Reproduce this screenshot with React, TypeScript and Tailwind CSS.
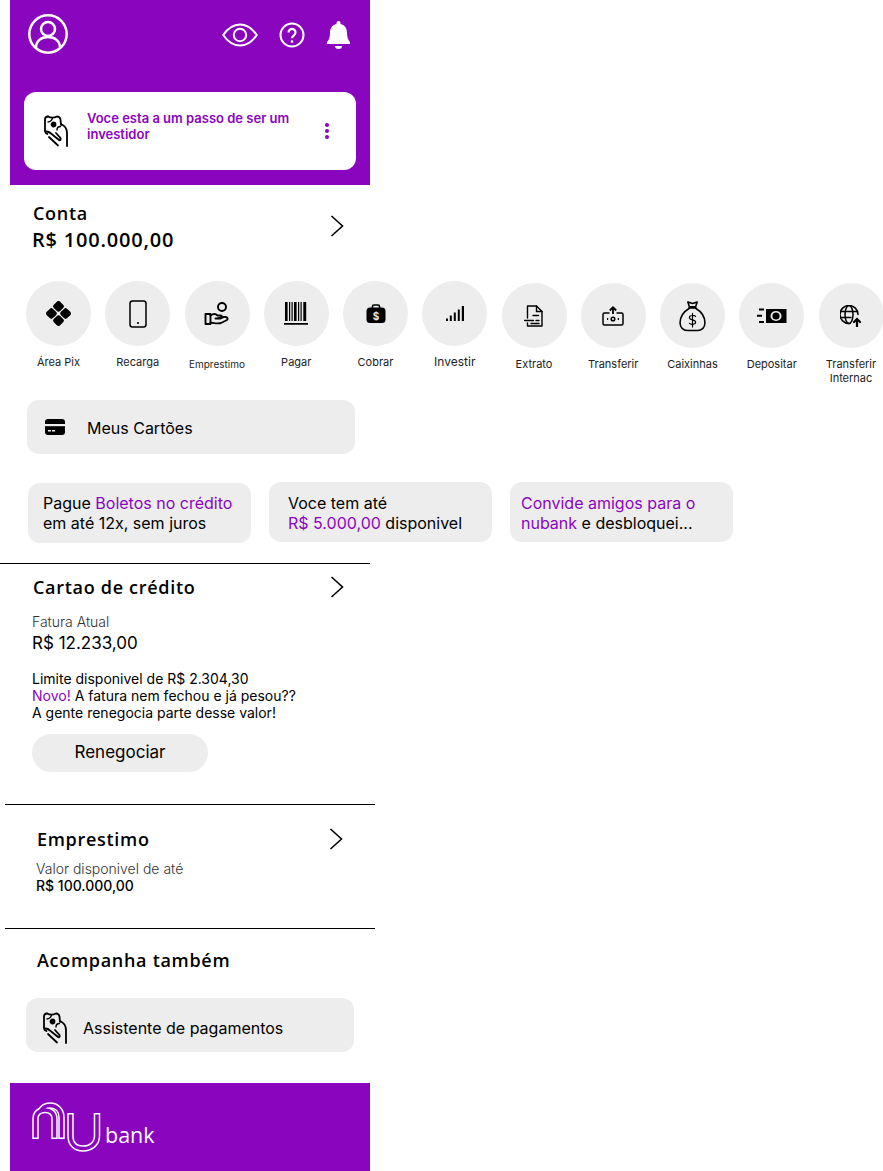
import type { ReactNode } from 'react'

const purple = '#8a05be'

function Chevron({ className }: { className?: string }) {
  return (
    <span className={`flex h-[30px] w-[30px] items-center justify-center ${className ?? ''}`}>
      <svg width="14" height="22" viewBox="0 0 14 22" fill="none" stroke="currentColor" strokeWidth={1.600}>
        <path d="M1.500 1l11 10-11 10" />
      </svg>
    </span>
  )
}

function MoneyHand({ className }: { className?: string }) {
  return (
    <svg width="24" height="32" viewBox="0 0 24 32" fill="none" stroke="currentColor" strokeWidth={1.800} strokeLinecap="round" strokeLinejoin="round" className={className}>
      <path d="M4 1.500C2 1.500 1 2.500 1 4.500v11c0 2 1 3 2.500 3.500" />
      <path d="M4 1.500c3 1.500 6 1.500 9 0 2 0 3 1 3.500 3L17 10" />
      <path d="M4 7c2 0 4-2 4.500-4M13 15c0-2 1.500-3.500 3.500-3.500" strokeWidth={1.400} />
      <circle cx="9.500" cy="9.500" r="2" fill="currentColor" />
      <path d="M17 9c3.500 1.500 6 5 6 9v13" />
      <path d="M2.500 16.500c2 0 3 .5 4.500 2l8 6.500c1.500 1 2.500-1 1-2.500l-4-4.500" />
      <path d="M5 22l9 8.500" />
    </svg>
  )
}

function Pix() {
  return (
    <svg width="25" height="25" viewBox="0 0 26 26" fill="currentColor">
      <rect x="8.400" y="1" width="9.200" height="9.200" rx="2.400" transform="rotate(45 13 5.600)" />
      <rect x="8.400" y="15.800" width="9.200" height="9.200" rx="2.400" transform="rotate(45 13 20.400)" />
      <rect x="1" y="8.400" width="9.200" height="9.200" rx="2.400" transform="rotate(45 5.600 13)" />
      <rect x="15.800" y="8.400" width="9.200" height="9.200" rx="2.400" transform="rotate(45 20.400 13)" />
    </svg>
  )
}

function Phone() {
  return (
    <svg width="18" height="28" viewBox="0 0 18 28" fill="none" stroke="currentColor" strokeWidth={1.500}>
      <rect x="1" y="1" width="16" height="26" rx="2.500" />
      <circle cx="9" cy="23" r="1.100" fill="currentColor" stroke="none" />
    </svg>
  )
}

function HandCoin() {
  return (
    <svg width="26" height="26" viewBox="0 0 26 26" fill="none" stroke="currentColor" strokeWidth={1.900} strokeLinejoin="round" strokeLinecap="round">
      <circle cx="18" cy="6" r="4" />
      <rect x="1.500" y="13" width="5" height="10" />
      <path d="M6.500 14.500c3-2 5-2 7 0h3a1.500 1.500 0 0 1 0 3h-5M13 17.500l7-1.500c3-.5 4.500 1.500 3 3l-6 3c-3 1-7 0-10.500-.5" />
    </svg>
  )
}

function Barcode() {
  return (
    <svg width="24" height="24" viewBox="0 0 24 24" fill="currentColor">
      <path d="M1 0h2.600v19H1zM5 0h1.200v19H5zM7.500 0h1.200v19H7.500zM10 0h2.600v19H10zM14 0h1.200v19H14zM16.500 0h1.200v19h-1.200zM19.300 0h2.900v19h-2.900zM0 21h24v1.800H0z" />
    </svg>
  )
}

function Briefcase() {
  return (
    <svg width="20" height="20" viewBox="0 0 20 20">
      <path d="M6.500 4V2.500A1.500 1.500 0 0 1 8 1h4a1.500 1.500 0 0 1 1.500 1.500V4" fill="none" stroke="currentColor" strokeWidth="1.600" />
      <rect x="0.500" y="3.500" width="19" height="15.500" rx="3.500" fill="currentColor" />
      <text x="10" y="15.500" textAnchor="middle" fill="#ededed" fontSize="10" fontWeight="700" fontFamily="Inter, sans-serif">$</text>
    </svg>
  )
}

function Signal() {
  return (
    <svg width="18" height="15" viewBox="0 0 18 15" fill="currentColor">
      <path d="M0 12.500h2V15H0zM3.800 9.500h2V15h-2zM7.800 6.500h2V15h-2zM11.800 3.500h2V15h-2zM15.800 0h2.200v15h-2.200z" />
    </svg>
  )
}

function Doc() {
  return (
    <svg width="20" height="22" viewBox="0 0 20 22" fill="none" stroke="currentColor" strokeWidth={1.400} strokeLinejoin="round" strokeLinecap="round">
      <path d="M3.500 13V1h9l5.500 5.500V21H3.500v-3" />
      <path d="M12.500 1v5.500H18" />
      <path d="M0.500 15.500h9M9 10.500h5.500M12 15.500h3M7 18.500h8" />
    </svg>
  )
}

function TransferBox() {
  return (
    <svg width="22" height="20" viewBox="0 0 22 20" fill="none" stroke="currentColor" strokeWidth={1.500} strokeLinejoin="round">
      <path d="M7.500 7H2.500A1.500 1.500 0 0 0 1 8.500v9A1.500 1.500 0 0 0 2.500 19h17a1.500 1.500 0 0 0 1.500-1.500v-9A1.500 1.500 0 0 0 19.500 7H14.500" />
      <path d="M11 8V1.500M7.800 4.500L11 1.200l3.200 3.300" strokeWidth={1.800} />
      <circle cx="11" cy="13" r="1.800" />
      <path d="M5 13h1.200M15.800 13H17" strokeWidth={1.800} />
    </svg>
  )
}

function MoneyBag() {
  return (
    <svg width="27" height="32" viewBox="0 0 26 30" fill="none" stroke="currentColor" strokeWidth={1.500} strokeLinejoin="round" strokeLinecap="round">
      <path d="M8.500 1.500l4.500 1.500 4.500-1.500-1.500 4.500h-6z" />
      <path d="M10 7.500c-5 3-9 8-9 14C1 26 4 29 8 29h10c4 0 7-3 7-7.500 0-6-4-11-9-14" />
      <path d="M10 7h6" strokeWidth={2} />
      <path d="M16 15.500c-1-1.500-6-1.500-6 1 0 3 6 1.500 6 4.500 0 2.500-5 2.500-6 1M13 12.500v13" strokeWidth={1.100} />
    </svg>
  )
}

function Cash() {
  return (
    <svg width="30" height="16" viewBox="0 0 30 16">
      <path d="M2 .5h5v2H2zM0 6.700h5v2H0zM2 13h5v2H2z" fill="currentColor" />
      <rect x="9" y="1" width="20.500" height="14" fill="currentColor" />
      <ellipse cx="19" cy="8" rx="5.500" ry="5" fill="#ededed" />
      <circle cx="19" cy="8" r="3.600" fill="currentColor" />
    </svg>
  )
}

function GlobeUp() {
  return (
    <svg width="22" height="22" viewBox="0 0 22 22" fill="none" stroke="currentColor" strokeWidth={1.500} strokeLinecap="round">
      <path d="M9 18.500a9 9 0 1 1 9-9" />
      <ellipse cx="9" cy="9.500" rx="4" ry="9" />
      <path d="M1 6.500h16M1 12.500h10" />
      <path d="M17 21.500v-7M14 17l3-3 3 3" strokeWidth={2.200} />
    </svg>
  )
}

function CardIcon() {
  return (
    <svg width="20" height="16" viewBox="0 0 20 16">
      <rect width="20" height="16" rx="3" fill="currentColor" />
      <path d="M0 5h20v2.200H0z" fill="#ededed" />
      <path d="M3 11h3v1.500H3zM7 11h3v1.500H7z" fill="#ededed" />
    </svg>
  )
}

const actions = [
  { label: 'Área Pix', icon: <Pix />, size: 'text-[11px]', top: 'mt-0', gap: 'mt-[9px]' },
  { label: 'Recarga', icon: <Phone />, size: 'text-[11px]', top: 'mt-0', gap: 'mt-[9px]' },
  { label: 'Emprestimo', icon: <HandCoin />, size: 'text-[10px]', top: 'mt-0', gap: 'mt-[11px]' },
  { label: 'Pagar', icon: <Barcode />, size: 'text-[11px]', top: 'mt-0', gap: 'mt-[9px]' },
  { label: 'Cobrar', icon: <Briefcase />, size: 'text-[11px]', top: 'mt-0', gap: 'mt-[9px]' },
  { label: 'Investir', icon: <Signal />, size: 'text-[12px]', top: 'mt-0', gap: 'mt-[9px]' },
  { label: 'Extrato', icon: <Doc />, size: 'text-[11px]', top: 'mt-[2px]', gap: 'mt-[9px]' },
  { label: 'Transferir', icon: <TransferBox />, size: 'text-[11px]', top: 'mt-[2px]', gap: 'mt-[9px]' },
  { label: 'Caixinhas', icon: <MoneyBag />, size: 'text-[11px]', top: 'mt-[2px]', gap: 'mt-[9px]' },
  { label: 'Depositar', icon: <Cash />, size: 'text-[11px]', top: 'mt-[2px]', gap: 'mt-[9px]' },
  { label: 'Transferir Internac', icon: <GlobeUp />, size: 'text-[11px]', top: 'mt-[2px]', gap: 'mt-[9px]' },
]

function Heading({ children, className }: { children: ReactNode; className?: string }) {
  return <h2 className={`font-['Open_Sans',sans-serif] text-[18px] leading-[22px] font-semibold tracking-[0.7px] text-black ${className ?? ''}`}>{children}</h2>
}

export default function App() {
  return (
    <div className="h-[1171px] w-[883px] overflow-hidden bg-white font-['Inter',sans-serif] text-black">
      {/* top purple block */}
      <header className="ml-[10px] h-[185px] w-[360px] bg-[#8a05be] px-[14px] pt-[14px] text-white">
        <div className="flex items-start justify-between pr-[5px] pl-[4px]">
          <svg width="40" height="40" viewBox="0 0 40 40" fill="none" stroke="currentColor" strokeWidth={2.500}>
            <circle cx="20" cy="20" r="18.700" />
            <circle cx="20" cy="15" r="7" />
            <path d="M8 34c0-7 5-11 12-11s12 4 12 11" />
          </svg>
          <div className="mt-[7px] flex items-center gap-[21px]">
            <svg width="36" height="24" viewBox="0 0 36 24" fill="none" stroke="currentColor" strokeWidth={2}>
              <path d="M1.200 12C6 5 12 1.500 18 1.500S30 5 34.800 12C30 19 24 22.500 18 22.500S6 19 1.200 12z" />
              <circle cx="18" cy="12" r="6.200" />
            </svg>
            <svg width="26" height="26" viewBox="0 0 26 26" fill="none" stroke="currentColor" strokeWidth={2}>
              <circle cx="13" cy="13" r="11.500" />
              <path d="M9.500 10.500a3.500 3.500 0 1 1 5.500 2.800c-1.300.9-2 1.500-2 3" strokeWidth={2.200} />
              <circle cx="13" cy="19.500" r="1.300" fill="currentColor" stroke="none" />
            </svg>
            <svg width="25" height="28" viewBox="0 0 24 28" fill="currentColor">
              <path d="M12 0a2 2 0 0 1 2 2v1c4.500 1 6.500 4.500 6.500 9 0 4 1 7 3 9v2H.5v-2c2-2 3-5 3-9 0-4.500 2-8 6.500-9V2a2 2 0 0 1 2-2z" />
              <path d="M8.500 25h7a3.500 3 0 0 1-7 0z" />
            </svg>
          </div>
        </div>
        <div className="mt-[38px] flex h-[78px] items-center rounded-xl bg-white pr-[27px] pl-[20px]">
          <MoneyHand className="text-black" />
          <p className="mb-[10px] ml-[19px] flex-1 text-[13px] leading-4 font-semibold text-[#8a05be]">Voce esta a um passo de ser um investidor</p>
          <div className="flex flex-col gap-[2px]">
            <span className="h-1 w-1 rounded-full bg-[#8a05be]" />
            <span className="h-1 w-1 rounded-full bg-[#8a05be]" />
            <span className="h-1 w-1 rounded-full bg-[#8a05be]" />
          </div>
        </div>
      </header>

      {/* conta */}
      <section className="flex w-[370px] items-center justify-between pt-[17px] pr-[18px] pl-[32px]">
        <div>
          <Heading className="pl-px">Conta</Heading>
          <p className="mt-[4px] font-['Open_Sans',sans-serif] text-[20px] leading-[23px] font-semibold tracking-[0.8px]">R$ 100.000,00</p>
        </div>
        <Chevron className="-mt-[2px]" />
      </section>

      {/* quick actions */}
      <div className="mt-[30px] ml-[26px] flex h-[103px] items-start gap-[14.250px]">
        {actions.map((a) => (
          <div key={a.label} className={`flex w-[65px] flex-col items-center ${a.top}`}>
            <div className="flex h-[65px] w-[65px] items-center justify-center rounded-full bg-[#ededed]">{a.icon}</div>
            <span className={`${a.gap} text-center ${a.size} leading-[14px] text-[#222]`}>{a.label}</span>
          </div>
        ))}
      </div>

      <button className="mt-[16px] ml-[27px] flex h-[54px] w-[328px] items-center rounded-xl bg-[#ededed] pl-[18px] text-[16px]">
        <CardIcon />
        <span className="mt-[2px] ml-[22px]">Meus Cartões</span>
      </button>

      {/* promos */}
      <div className="mt-[28px] flex items-start pl-[28px]">
        <div className="mt-px h-[60px] w-[223px] rounded-xl bg-[#ededed] px-[15px] pt-[10px] text-[16px] leading-[20px]">
          Pague <span className="text-[#8a05be]">Boletos no crédito</span><br />em até 12x, sem juros
        </div>
        <div className="ml-[18px] h-[60px] w-[223px] rounded-xl bg-[#ededed] px-[19px] pt-[11px] text-[16px] leading-[20px]">
          Voce tem até<br /><span className="text-[#8a05be]">R$ 5.000,00</span> disponivel
        </div>
        <div className="ml-[18px] h-[60px] w-[223px] rounded-xl bg-[#ededed] pt-[11px] pl-[11px] text-[16px] leading-[20px]">
          <span className="text-[#8a05be]">Convide amigos para o</span><br />
          <span className="text-[#8a05be]">nubank</span> e desbloquei...
        </div>
      </div>

      {/* credit card */}
      <section className="mt-[20px] w-[370px] border-t border-black pr-[18px] pl-[32px]">
        <div className="flex items-center justify-between pt-[8px]">
          <Heading className="pl-px">Cartao de crédito</Heading>
          <Chevron />
        </div>
        <p className="mt-[11px] text-[14px] leading-[17px] font-light text-[#333]">Fatura Atual</p>
        <p className="mt-[2px] text-[17px] leading-[22px]">R$ 12.233,00</p>
        <p className="mt-[16px] text-[14px] leading-[17px]">
          Limite disponivel de R$ 2.304,30<br />
          <span className="text-[#8a05be]">Novo!</span> A fatura nem fechou e já pesou??<br />
          A gente renegocia parte desse valor!
        </p>
        <button className="mt-[13px] flex h-[38px] w-[176px] items-center justify-center rounded-full bg-[#ededed] text-[17px]">Renegociar</button>
      </section>

      {/* loan */}
      <section className="mt-[32px] ml-[5px] w-[370px] border-t border-black pr-[24px] pl-[31px]">
        <div className="flex items-center justify-between pt-[19px]">
          <Heading className="pl-px">Emprestimo</Heading>
          <Chevron />
        </div>
        <p className="mt-[6px] text-[14px] leading-[17px] font-light text-[#333]">Valor disponivel de até</p>
        <p className="text-[14px] leading-[17px] font-medium">R$ 100.000,00</p>
      </section>

      {/* also */}
      <section className="mt-[34px] ml-[5px] w-[370px] border-t border-black pt-[20px] pl-[32px]">
        <Heading>Acompanha também</Heading>
      </section>

      <button className="mt-[27px] ml-[26px] flex h-[54px] w-[328px] items-center rounded-xl bg-[#ededed] pt-[6px] pl-[17px] text-[16px]">
        <MoneyHand />
        <span className="ml-[16px]">Assistente de pagamentos</span>
      </button>

      {/* footer */}
      <footer className="mt-[31px] ml-[10px] flex h-[88px] w-[360px] bg-[#8a05be] pt-[19px] pl-[22px] text-white">
        <svg width="69" height="50" viewBox="0 0 69 50" fill="none" strokeLinejoin="round">
          <g stroke="#fff" strokeWidth={6.500}>
            <path d="M3.500 37V17c0-6 4-9 9.500-9s9.500 3 9.500 9v20" />
            <path d="M8 10c2-4 5-6.500 10-6.500 7 0 11.500 5 11.500 12V37" />
            <path d="M38.500 11v23c0 8 5 12.500 12.500 12.500S65 42 65 34V11" />
          </g>
          <g stroke={purple} strokeWidth={3.500}>
            <path d="M3.500 35.500V17c0-6 4-9 9.500-9s9.500 3 9.500 9v18.500" />
            <path d="M8 10c2-4 5-6.500 10-6.500 7 0 11.500 5 11.500 12v20" />
            <path d="M38.500 12.500V34c0 8 5 12.500 12.500 12.500S65 42 65 34V12.500" />
          </g>
        </svg>
        <span className="mt-[15px] ml-[4px] font-['Open_Sans',sans-serif] text-[21.500px] leading-[36px] font-normal">bank</span>
      </footer>
    </div>
  )
}
